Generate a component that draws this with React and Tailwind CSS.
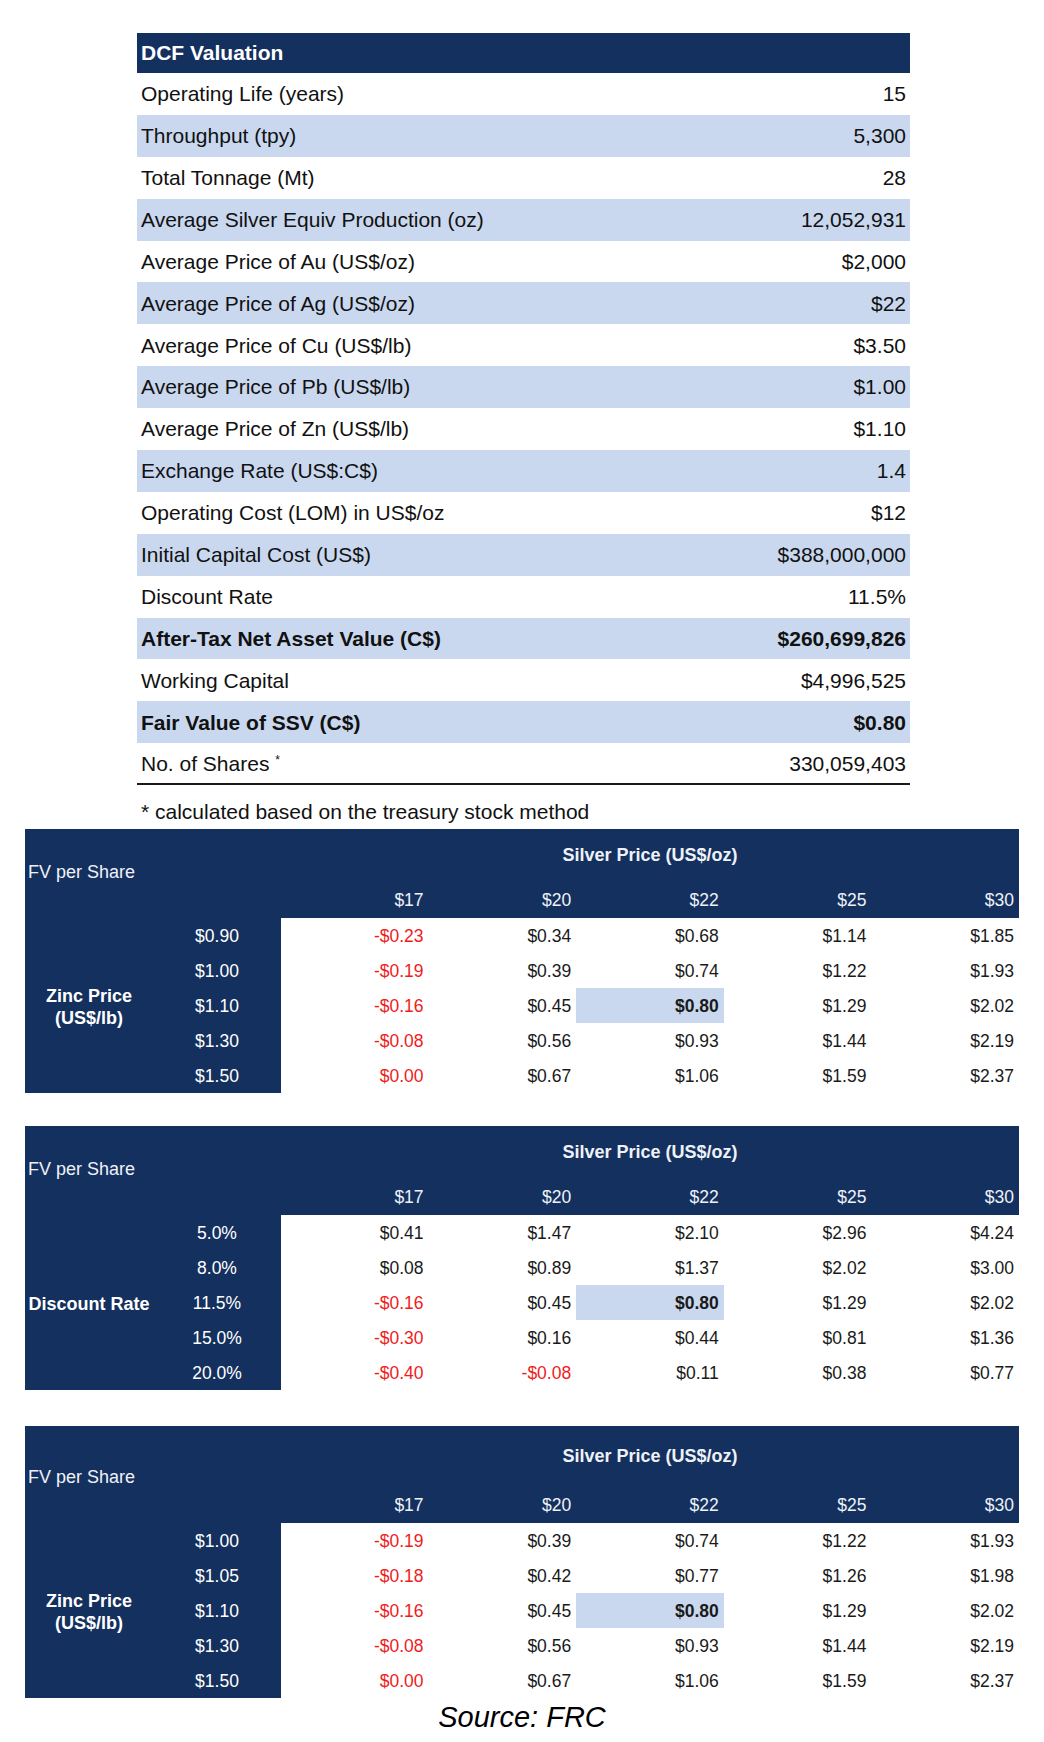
const dcfRows = [
  ["Operating Life (years)", "15"],
  ["Throughput (tpy)", "5,300"],
  ["Total Tonnage (Mt)", "28"],
  ["Average Silver Equiv Production (oz)", "12,052,931"],
  ["Average Price of Au (US$/oz)", "$2,000"],
  ["Average Price of Ag (US$/oz)", "$22"],
  ["Average Price of Cu (US$/lb)", "$3.50"],
  ["Average Price of Pb (US$/lb)", "$1.00"],
  ["Average Price of Zn (US$/lb)", "$1.10"],
  ["Exchange Rate (US$:C$)", "1.4"],
  ["Operating Cost (LOM) in US$/oz", "$12"],
  ["Initial Capital Cost (US$)", "$388,000,000"],
  ["Discount Rate", "11.5%"],
  ["After-Tax Net Asset Value (C$)", "$260,699,826", true],
  ["Working Capital", "$4,996,525"],
  ["Fair Value of SSV (C$)", "$0.80", true],
]

const silverCols = ["$17", "$20", "$22", "$25", "$30"]

const tables = [
  {
    group: ["Zinc Price", "(US$/lb)"],
    rows: ["$0.90", "$1.00", "$1.10", "$1.30", "$1.50"],
    data: [
      ["-$0.23", "$0.34", "$0.68", "$1.14", "$1.85"],
      ["-$0.19", "$0.39", "$0.74", "$1.22", "$1.93"],
      ["-$0.16", "$0.45", "$0.80", "$1.29", "$2.02"],
      ["-$0.08", "$0.56", "$0.93", "$1.44", "$2.19"],
      ["$0.00", "$0.67", "$1.06", "$1.59", "$2.37"],
    ],
    tall: false,
    mt: "mt-0",
  },
  {
    group: ["Discount Rate"],
    rows: ["5.0%", "8.0%", "11.5%", "15.0%", "20.0%"],
    data: [
      ["$0.41", "$1.47", "$2.10", "$2.96", "$4.24"],
      ["$0.08", "$0.89", "$1.37", "$2.02", "$3.00"],
      ["-$0.16", "$0.45", "$0.80", "$1.29", "$2.02"],
      ["-$0.30", "$0.16", "$0.44", "$0.81", "$1.36"],
      ["-$0.40", "-$0.08", "$0.11", "$0.38", "$0.77"],
    ],
    tall: false,
    mt: "mt-[33px]",
  },
  {
    group: ["Zinc Price", "(US$/lb)"],
    rows: ["$1.00", "$1.05", "$1.10", "$1.30", "$1.50"],
    data: [
      ["-$0.19", "$0.39", "$0.74", "$1.22", "$1.93"],
      ["-$0.18", "$0.42", "$0.77", "$1.26", "$1.98"],
      ["-$0.16", "$0.45", "$0.80", "$1.29", "$2.02"],
      ["-$0.08", "$0.56", "$0.93", "$1.44", "$2.19"],
      ["$0.00", "$0.67", "$1.06", "$1.59", "$2.37"],
    ],
    tall: true,
    mt: "mt-[36px]",
  },
]

const isRed = (v) => v.startsWith("-") || v === "$0.00"

const DcfTable = () => {
  return (
    <div className="ml-[137px] w-[773px] text-[21px] text-[#111]">
      <div className="h-[40px] bg-[#14305e] text-white font-bold flex items-center pl-[4px]">
        DCF Valuation
      </div>
      {dcfRows.map(([label, value, bold], i) => (
        <div
          key={label}
          className={`h-[41.9px] flex items-center justify-between px-[4px] ${i % 2 === 1 ? "bg-[#c9d8ef]" : "bg-white"} ${bold ? "font-bold" : ""}`}
        >
          <span>{label}</span>
          <span>{value}</span>
        </div>
      ))}
      <div className="h-[42px] flex items-center justify-between px-[4px] border-b-2 border-[#1a1a1a]">
        <span>
          No. of Shares <sup className="text-[12px] -top-[7px]">*</sup>
        </span>
        <span>330,059,403</span>
      </div>
    </div>
  )
}

const Sensitivity = ({ t }) => {
  return (
    <div className={`${t.mt} w-[994px] text-[18px]`}>
      {/* header */}
      <div className="flex bg-[#14305e] text-[#eef2f8]">
        <div className={`w-[256px] pl-[3px] leading-[20px] ${t.tall ? "pt-[41px]" : "pt-[33px]"}`}>
          FV per Share
        </div>
        <div className="flex-1 flex flex-col">
          <div className={`${t.tall ? "h-[60px]" : "h-[52px]"} flex items-center justify-center font-bold`}>
            Silver Price (US$/oz)
          </div>
          <div className="h-[37px] grid grid-cols-5 items-center text-[17.5px]">
            {silverCols.map((c) => (
              <div key={c} className="text-right pr-[5px]">{c}</div>
            ))}
          </div>
        </div>
      </div>
      {/* body */}
      <div className="flex">
        <div className="w-[256px] bg-[#14305e] text-white flex">
          <div className="w-[128px] flex flex-col items-center justify-center font-bold leading-[22px] pt-[2px]">
            {t.group.map((g) => (
              <span key={g}>{g}</span>
            ))}
          </div>
          <div className="w-[128px] flex flex-col text-[17.5px]">
            {t.rows.map((r) => (
              <div key={r} className="h-[35px] flex items-center justify-center">
                {r}
              </div>
            ))}
          </div>
        </div>
        <div className="flex-1 grid grid-cols-5 text-[17.5px] text-[#1a1a1a]">
          {t.data.map((row, ri) =>
            row.map((v, ci) => {
              const hi = ri === 2 && ci === 2
              return (
                <div
                  key={`${ri}-${ci}`}
                  className={`h-[35px] flex items-center justify-end pr-[5px] ${hi ? "bg-[#c9d8ef] font-bold" : ""} ${isRed(v) ? "text-[#f01c1c]" : ""}`}
                >
                  {v}
                </div>
              )
            })
          )}
        </div>
      </div>
    </div>
  )
}

const App = () => {
  return (
    <div className="w-[1044px] min-h-[1742px] bg-white pt-[33px] font-['Liberation_Sans',Arial,sans-serif]">
      <DcfTable />
      <div className="ml-[141px] mt-[15px] mb-[5px] leading-[24px] text-[21px] text-[#111]">
        * calculated based on the treasury stock method
      </div>
      <div className="ml-[25px]">
        {tables.map((t, i) => (
          <Sensitivity key={i} t={t} />
        ))}
        <div className="w-[994px] mt-[2px] text-center italic text-[29px] leading-[34px] text-black">
          Source: FRC
        </div>
      </div>
    </div>
  )
}

export default App
